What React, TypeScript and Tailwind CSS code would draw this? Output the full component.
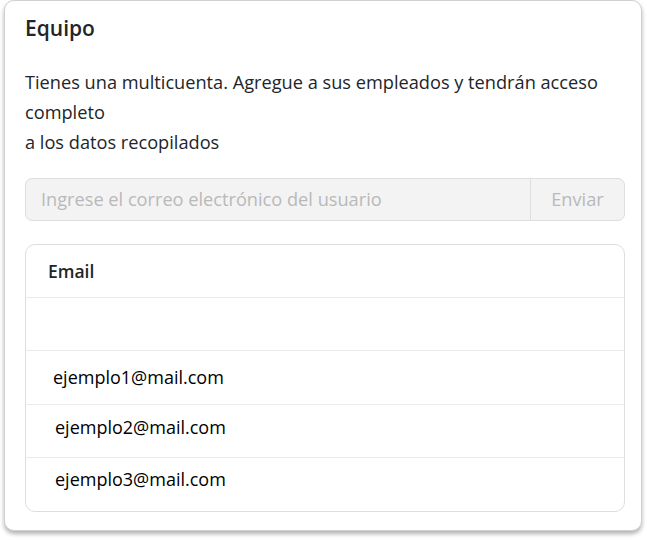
import React from "react";

const emails = [
  { email: "ejemplo1@mail.com", cls: "h-[54px] pl-[27px]" },
  { email: "ejemplo2@mail.com", cls: "h-[53px] pl-[29px] pb-[8px]" },
  { email: "ejemplo3@mail.com", cls: "h-[54px] pl-[29px] pb-[10px]" },
];

const App: React.FC = () => {
  return (
    <div className="w-[647px] h-[540px] bg-white font-['Open_Sans','Noto_Sans',sans-serif] text-[#212529]">
      <div className="ml-[4px] w-[638px] h-[531px] rounded-[10px] border border-[#d0d0d0] bg-white shadow-[0_3px_4px_rgba(0,0,0,0.3)] pl-[20px] pr-[16px] pt-[13px]">
        {/* Header */}
        <h2 className="text-[21px] font-semibold leading-[28px]">Equipo</h2>

        <p className="mt-[25px] text-[18.2px] leading-[30px]">
          Tienes una multicuenta. Agregue a sus empleados y tendrán acceso completo
          <br />a los datos recopilados
        </p>

        {/* Invite form */}
        <div className="mt-[21px] flex h-[43px] rounded-[7px] border border-[#dedede] bg-[#f3f3f3] text-[18.2px] text-[#b9b9b9]">
          <input
            disabled
            placeholder="Ingrese el correo electrónico del usuario"
            className="flex-1 bg-transparent px-[15px] outline-none placeholder:text-[#b9b9b9]"
          />
          <button disabled className="w-[94px] border-l border-[#dedede] text-center">
            Enviar
          </button>
        </div>

        {/* Team table */}
        <div className="mt-[23px] rounded-[10px] border border-[#dedede]">
          <div className="h-[52px] flex items-center px-[22px] text-[17.5px] font-semibold">Email</div>
          <div className="h-[53px] border-t border-[#ebebeb]"></div>
          {emails.map((r) => (
            <div key={r.email} className={`${r.cls} border-t border-[#ebebeb] flex items-center text-[18px] text-black`}>
              {r.email}
            </div>
          ))}
        </div>
      </div>
    </div>
  );
};

export default App;
